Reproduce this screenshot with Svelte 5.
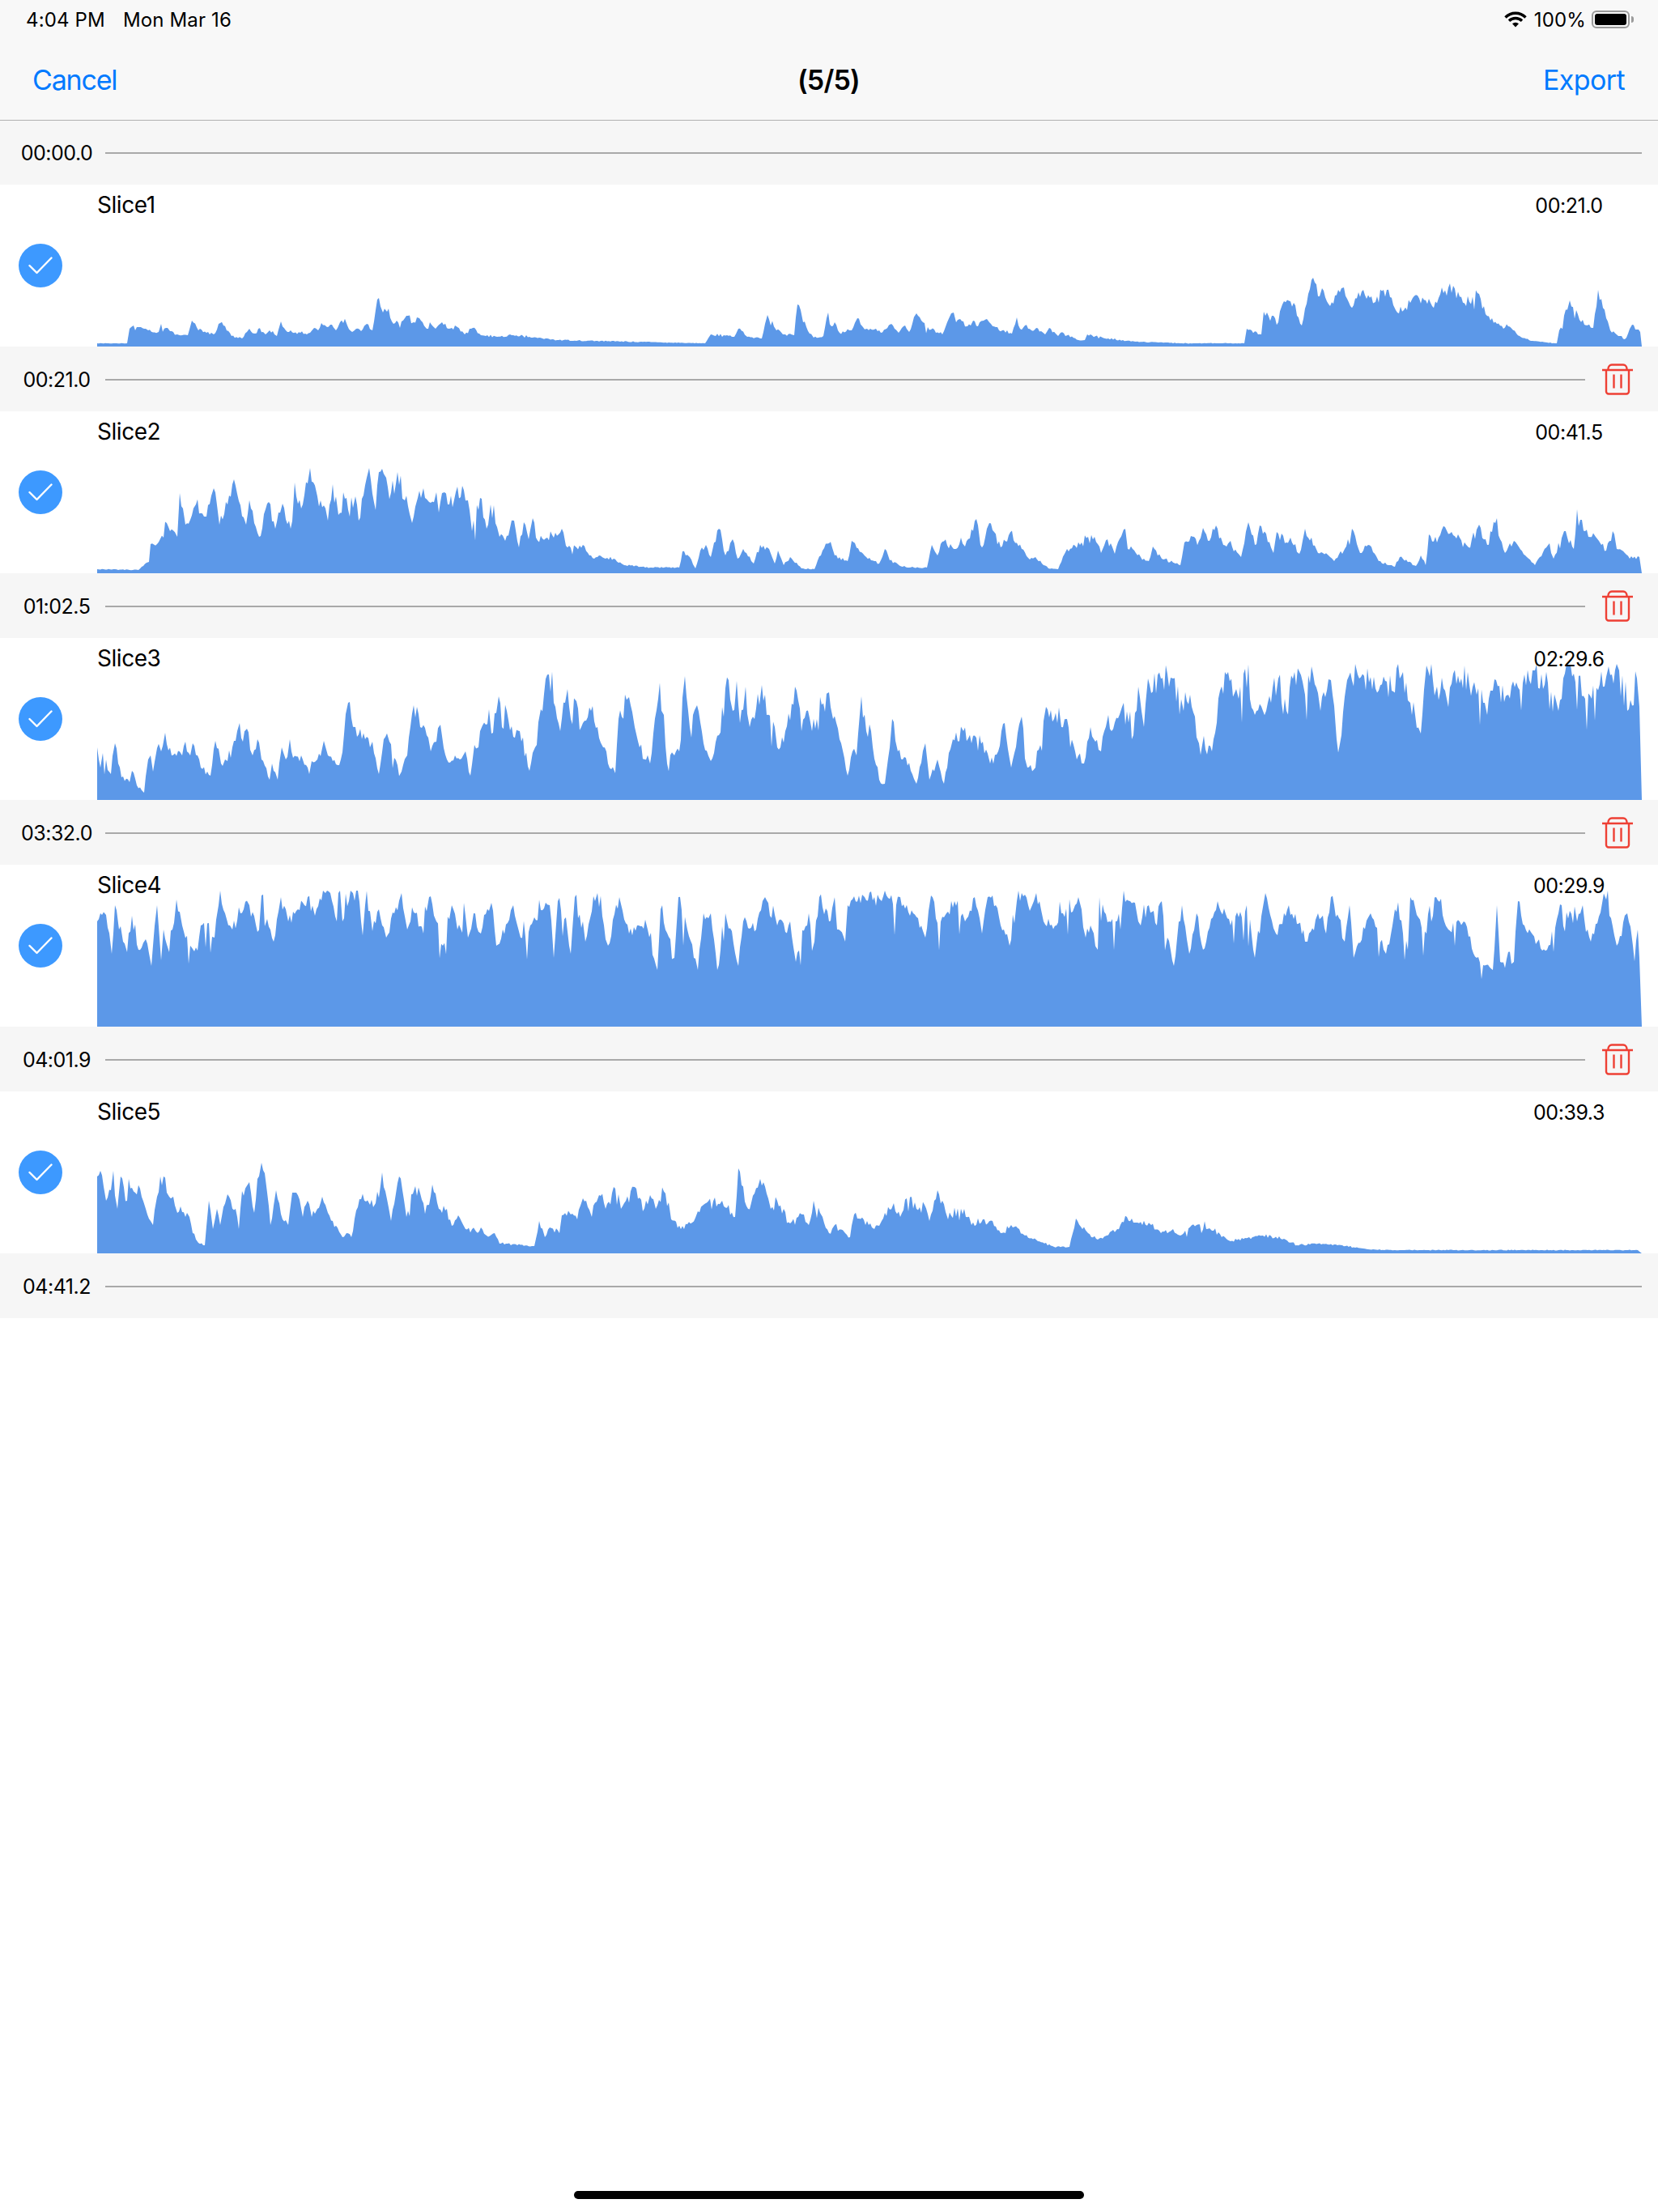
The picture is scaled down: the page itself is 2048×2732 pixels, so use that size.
<script>
    // control points of each waveform: page x, height above the baseline
    const slices = [
        {
            name: "Slice1", length: "00:21.0", end: "00:21.0", amp: 0.2,
            points: "120 4 157 4 160 22 165 26 172 24 183 20 196 18 199 28 210 19 219 15 232 14 237 32 245 20 257 18 264 15 272 29 276 26 286 13 299 10 308 22 315 16 319 22 328 15 333 20 342 13 347 31 353 20 371 17 379 15 388 23 393 20 397 29 404 24 408 27 415 20 420 30 429 26 435 18 440 22 446 19 453 28 460 20 464 45 468 60 473 42 478 43 484 31 496 31 504 38 511 30 518 35 527 22 533 27 538 22 546 30 554 22 565 24 574 15 584 23 594 14 614 12 634 14 670 10 690 8 871 4 878 15 907 12 912 22 923 12 941 10 948 39 959 20 970 15 981 14 985 52 989 45 992 30 1000 16 1005 11 1017 13 1021 35 1023 42 1027 25 1031 30 1037 17 1052 20 1059 35 1066 24 1071 22 1082 22 1088 17 1101 28 1110 17 1118 26 1123 18 1132 41 1140 30 1146 24 1164 15 1170 30 1175 41 1178 42 1181 30 1186 34 1195 25 1202 32 1208 25 1215 32 1222 30 1230 24 1238 20 1250 16 1256 36 1260 22 1266 26 1274 20 1280 23 1291 15 1296 23 1307 13 1310 17 1332 8 1340 8 1343 15 1365 10 1403 6 1458 4 1537 4 1540 22 1558 15 1561 43 1575 35 1579 30 1584 52 1598 54 1608 26 1614 53 1622 85 1628 62 1633 72 1643 50 1653 70 1660 73 1668 50 1682 68 1699 55 1713 70 1724 45 1738 45 1745 60 1769 50 1783 66 1795 75 1811 50 1825 66 1835 40 1849 28 1863 25 1877 13 1891 7 1923 4 1926 20 1939 57 1951 33 1968 23 1974 70 1989 20 2007 9 2016 27 2026 18 2028 0"
        },
        {
            name: "Slice2", length: "00:41.5", end: "01:02.5", amp: 0.24,
            points: "120 5 171 4 184 14 186 36 202 44 206 62 219 45 222 99 229 60 242 85 255 70 264 105 271 60 281 85 291 108 304 60 310 80 320 45 332 88 340 55 349 86 359 55 364 112 372 80 383 130 392 95 405 65 411 110 418 72 426 92 432 70 439 95 443 65 456 130 464 78 468 125 477 118 487 98 491 125 500 90 509 62 516 93 523 105 530 88 539 100 542 75 549 100 555 85 571 108 578 90 583 52 593 93 601 55 606 85 617 45 624 40 635 65 641 32 647 63 653 42 658 68 662 44 676 44 686 50 694 55 699 34 712 32 720 35 728 22 738 20 758 18 771 10 803 7 839 7 843 27 852 20 859 6 865 28 872 35 878 20 888 55 896 22 905 42 911 18 918 30 931 12 939 35 950 30 957 12 961 28 968 10 976 20 990 6 1006 5 1016 28 1024 37 1031 22 1047 15 1052 40 1070 20 1086 12 1093 30 1099 16 1115 8 1145 7 1151 35 1158 22 1164 39 1181 30 1187 44 1192 33 1206 67 1211 35 1215 35 1222 62 1236 32 1246 47 1262 30 1272 17 1279 20 1295 6 1307 5 1318 30 1334 35 1352 45 1360 25 1368 42 1377 24 1388 54 1393 30 1399 30 1409 20 1419 15 1424 33 1435 18 1452 12 1458 10 1463 38 1475 45 1481 40 1486 56 1494 40 1502 59 1511 35 1520 40 1533 20 1542 63 1550 35 1558 58 1573 25 1577 51 1589 38 1594 44 1605 24 1612 55 1628 25 1641 22 1648 15 1661 30 1670 55 1680 25 1690 35 1703 15 1723 8 1729 20 1749 9 1755 22 1761 10 1765 48 1775 38 1785 57 1801 48 1814 32 1827 60 1837 35 1847 62 1859 25 1870 40 1886 20 1896 10 1914 37 1919 18 1932 52 1944 30 1948 79 1958 52 1971 45 1978 35 1984 28 1992 52 1997 30 2007 25 2013 18 2025 20 2028 0"
        },
        {
            name: "Slice3", length: "02:29.6", end: "03:32.0", amp: 0.24,
            points: "120 65 124 40 127 58 137 32 142 70 150 28 160 22 163 36 169 18 178 9 183 50 186 55 189 35 194 64 199 60 204 83 212 55 225 55 229 72 235 55 238 70 248 40 260 30 266 73 273 45 278 50 281 48 287 65 296 95 300 72 305 88 312 55 318 75 323 50 333 25 336 45 343 25 348 65 353 50 358 75 362 52 372 55 382 32 385 48 392 50 400 73 405 55 411 48 421 50 430 120 439 90 451 75 457 65 460 72 468 32 474 75 481 72 487 52 496 35 503 55 511 117 519 90 527 80 532 60 539 72 544 93 552 50 562 55 568 50 575 60 581 30 586 68 591 65 596 92 604 112 607 82 616 128 620 90 626 110 634 78 642 85 654 36 661 65 668 112 678 155 686 115 692 85 701 137 705 100 712 122 718 90 730 110 738 90 745 65 751 45 760 33 764 100 777 127 784 90 790 65 803 45 813 125 820 105 824 45 833 55 839 60 846 153 852 90 861 117 869 70 878 48 888 80 900 148 905 110 910 147 914 95 921 140 926 90 941 142 947 105 957 90 960 65 970 85 982 140 990 85 996 110 1003 85 1009 100 1024 133 1029 100 1037 75 1047 30 1053 60 1058 55 1064 128 1070 85 1076 85 1086 25 1093 20 1102 100 1109 60 1119 52 1132 20 1143 70 1148 25 1158 50 1166 20 1177 75 1190 85 1200 70 1210 80 1223 45 1233 60 1241 95 1249 40 1262 103 1269 40 1279 40 1292 115 1302 100 1311 90 1318 100 1328 60 1339 45 1347 90 1360 60 1369 105 1373 85 1386 115 1400 80 1406 140 1413 90 1418 150 1449 150 1462 110 1470 130 1481 70 1497 60 1507 135 1517 158 1530 125 1538 162 1550 105 1560 110 1566 120 1579 150 1589 110 1599 158 1612 130 1620 165 1631 110 1644 148 1651 75 1657 80 1664 148 1677 155 1703 135 1729 150 1742 120 1755 82 1762 166 1775 140 1785 135 1805 150 1824 130 1834 120 1837 105 1844 135 1863 130 1883 155 1896 160 1925 110 1938 165 1958 125 1987 165 2000 160 2010 110 2022 150 2025 115 2028 0"
        },
        {
            name: "Slice4", length: "00:29.9", end: "04:01.9", amp: 0.12,
            points: "120 130 124 140 131 138 138 90 142 150 147 120 152 105 157 92 163 137 171 95 180 108 187 75 194 150 199 82 202 120 209 92 218 157 225 125 235 100 240 93 248 125 258 128 265 110 270 150 278 140 287 120 297 140 308 150 318 117 323 162 330 133 338 105 347 160 356 130 366 143 376 150 380 160 389 137 402 165 408 165 416 130 418 165 423 130 436 165 451 150 460 118 468 145 477 110 487 140 496 165 503 120 513 140 523 115 530 160 539 130 547 100 558 150 565 120 573 153 578 110 585 140 594 115 598 138 607 153 613 100 627 128 634 150 643 110 653 117 660 135 679 150 684 85 689 155 699 135 705 90 710 160 723 105 738 165 751 100 765 160 777 115 789 125 800 120 812 70 816 145 833 85 838 160 849 120 862 70 869 140 878 140 886 70 896 140 912 75 918 130 934 120 945 160 960 125 976 130 983 80 999 140 1006 105 1012 160 1024 130 1031 160 1034 120 1044 105 1047 150 1068 160 1089 155 1112 160 1128 140 1143 110 1150 162 1158 128 1169 140 1179 155 1192 130 1204 160 1213 115 1220 160 1230 150 1240 120 1247 100 1256 155 1262 165 1275 150 1280 165 1289 130 1305 125 1311 140 1328 150 1332 160 1341 110 1347 125 1356 95 1358 160 1370 130 1396 155 1409 125 1419 150 1429 125 1435 155 1442 110 1450 75 1460 150 1469 90 1478 140 1486 95 1504 155 1520 125 1540 150 1550 85 1563 165 1576 115 1592 150 1615 105 1628 140 1638 115 1644 160 1661 105 1667 150 1672 85 1693 140 1712 90 1723 145 1739 95 1742 160 1762 115 1774 160 1789 120 1808 130 1824 85 1844 70 1849 150 1853 80 1870 80 1875 155 1883 125 1899 105 1911 95 1929 150 1948 130 1955 150 1965 105 1984 157 1997 100 2010 140 2017 100 2023 120 2025 85 2028 0"
        },
        {
            name: "Slice5", length: "00:39.3", end: "04:41.2", amp: 0.22,
            points: "120 95 124 102 131 65 137 78 140 102 145 55 149 95 157 65 159 92 167 75 173 80 180 55 189 35 194 70 198 95 202 95 209 70 214 70 219 50 223 58 229 45 234 45 238 25 245 13 253 10 258 65 263 30 268 55 272 35 281 73 291 55 295 30 299 77 308 88 314 50 318 92 323 112 330 75 334 35 341 78 349 42 356 35 361 75 366 75 374 45 380 65 385 45 392 55 398 70 405 50 411 40 423 20 428 25 434 20 444 67 457 60 464 62 472 100 483 40 493 95 502 45 513 83 523 62 530 60 534 85 542 55 552 55 560 35 566 47 575 30 588 27 594 32 601 22 611 25 617 12 660 9 666 40 673 20 679 32 691 25 694 47 705 48 713 42 720 68 731 45 740 72 748 55 760 80 767 55 784 82 794 52 803 72 810 55 822 74 829 42 841 30 855 38 862 52 869 60 892 65 908 45 912 105 924 55 939 92 952 55 960 65 976 37 993 48 999 35 1005 65 1016 45 1024 25 1031 35 1044 25 1050 20 1055 48 1073 35 1080 30 1089 40 1104 62 1112 45 1120 68 1132 55 1142 60 1148 40 1158 78 1171 42 1191 55 1200 35 1226 40 1236 25 1249 35 1266 22 1282 15 1302 8 1321 8 1329 43 1337 30 1344 25 1354 18 1367 22 1380 30 1392 45 1403 38 1422 35 1432 28 1449 30 1458 22 1478 35 1497 28 1520 15 1543 20 1560 22 1586 18 1602 10 1628 12 1658 10 1690 5 1723 4 2023 4 2028 0"
        }
    ]

    function wavePath(slice, seed) {
        let state = seed
        const rand = () => {
            state = (state * 1664525 + 1013904223) % 4294967296
            return state / 4294967296
        }
        const nums = slice.points.split(" ").map(Number)
        let d = "M0 200"
        for (let i = 0; i < nums.length - 2; i += 2) {
            const [x0, h0, x1, h1] = nums.slice(i, i + 4)
            d += ` L${x0 - 120} ${200 - h0}`
            for (let x = x0 + 2; x < x1 - 1; x += 2) {
                const t = (x - x0) / (x1 - x0)
                const h = h0 + (h1 - h0) * t
                let wobble = h * slice.amp * (rand() - 0.5) + (h > 8 ? 1.5 * (rand() - 0.5) : 0)
                // narrow spikes and notches, only where the signal is loud
                if (h > 25) {
                    const kick = rand()
                    if (kick < 0.1) wobble += h * 0.16 * rand()
                    else if (kick < 0.17) wobble -= h * 0.3 * rand()
                }
                // the loudest peak in the reference stops about 168px up
                d += ` L${x - 120} ${Math.max(32, 200 - h - wobble).toFixed(1)}`
            }
        }
        return d + " L1908 200 Z"
    }
</script>

<div class="page">
    <header class="top">
        <div class="status">
            <span>4:04 PM</span>
            <span class="date">Mon Mar 16</span>
            <svg class="wifi" width="28" height="20" viewBox="0 0 28 20">
                <path d="M1.5 7.5 A17.5 17.5 0 0 1 26.5 7.5" fill="none" stroke="#000" stroke-width="3.4" />
                <path d="M6 11.8 A11.5 11.5 0 0 1 22 11.8" fill="none" stroke="#000" stroke-width="3.4" />
                <path d="M10 15.2 A6 6 0 0 1 18 15.2 L14 19.5 Z" fill="#000" />
            </svg>
            <span class="percent">100%</span>
            <div class="battery"><div class="charge"></div></div>
            <div class="nub"></div>
        </div>
        <nav class="nav">
            <span class="link">Cancel</span>
            <span class="title">(5/5)</span>
            <span class="link right">Export</span>
        </nav>
    </header>

    <div class="cut first">
        <span class="time">00:00.0</span>
        <div class="line"></div>
    </div>

    {#each slices as slice, i}
        <section class="slice">
            <div class="check">
                <svg width="30" height="22" viewBox="0 0 30 22">
                    <path d="M1.5 11 L10.5 20 L28.5 1.5" fill="none" stroke="#fff" stroke-width="2.4" stroke-linecap="round" stroke-linejoin="round" />
                </svg>
            </div>
            <svg class="wave" width="1908" height="200" viewBox="0 0 1908 200">
                <path d={wavePath(slice, 17 + i * 91)} fill="#5c98e8" />
            </svg>
            <div class="head">
                <span class="name">{slice.name}</span>
                <span class="length">{slice.length}</span>
            </div>
        </section>
        <div class="cut">
            <span class="time">{slice.end}</span>
            <div class="line"></div>
            {#if i < slices.length - 1}
                <svg class="trash" width="40" height="40" viewBox="0 1.5 40 40">
                    <g fill="none" stroke="#ee4035" stroke-width="2.4">
                        <path d="M1 9.5 H39" />
                        <path d="M8.5 9 V8 A5 5 0 0 1 13 3 H27 A5 5 0 0 1 31.5 8 V9" />
                        <path d="M6 10 V36 A3 3 0 0 0 9 39 H31 A3 3 0 0 0 34 36 V10" />
                        <path d="M15.5 15 V32 M24.5 15 V32" />
                    </g>
                </svg>
            {/if}
        </div>
    {/each}

    <div class="home"></div>
</div>

<style>
    :global(body) {
        background: #fff;
    }
    .page {
        display: flex;
        flex-direction: column;
        height: 2732px;
        box-sizing: border-box;
        overflow: hidden;
        font-family: Inter, "Liberation Sans", sans-serif;
        color: #000;
    }
    .top {
        height: 149px;
        box-sizing: border-box;
        flex-shrink: 0;
        background: #f8f8f8;
        border-bottom: 1px solid #b0b0b0;
    }
    .status {
        display: flex;
        align-items: center;
        height: 48px;
        padding: 0 30px 0 32px;
        font-size: 24px;
        letter-spacing: 0.15px;
    }
    .date {
        margin-left: 22px;
        flex: 1;
    }
    .percent {
        margin-left: 9px;
    }
    .battery {
        width: 47px;
        height: 22px;
        box-sizing: border-box;
        margin-left: 7px;
        padding: 2px;
        border: 2px solid #9b9b9b;
        border-radius: 6px;
    }
    .charge {
        height: 100%;
        background: #000;
        border-radius: 3px;
    }
    .nub {
        width: 3px;
        height: 8px;
        margin-left: 2px;
        background: #9b9b9b;
        border-radius: 0 3px 3px 0;
    }
    .nav {
        display: grid;
        grid-template-columns: 1fr auto 1fr;
        align-items: center;
        height: 100px;
        padding: 0 41px 0 40px;
        font-size: 34px;
    }
    .link {
        color: #007aff;
        letter-spacing: -1.2px;
    }
    .right {
        text-align: right;
        letter-spacing: -0.6px;
    }
    .title {
        font-weight: 600;
        letter-spacing: -0.8px;
    }
    .cut {
        display: flex;
        align-items: center;
        height: 80px;
        box-sizing: border-box;
        padding-top: 2px;
        flex-shrink: 0;
        background: #f6f6f6;
    }
    .cut.first {
        height: 79px;
        padding-top: 0;
    }
    .time {
        width: 110px;
        margin-left: 15px;
        text-align: center;
        font-size: 25px;
        letter-spacing: -0.5px;
        white-space: nowrap;
    }
    .line {
        flex: 1;
        height: 2px;
        margin: 0 20px 0 5px;
        background: #a9a9a9;
    }
    .trash {
        flex-shrink: 0;
        margin-right: 30px;
    }
    .slice {
        position: relative;
        display: flex;
        align-items: center;
        height: 200px;
        flex-shrink: 0;
        background: #fff;
    }
    .check {
        display: flex;
        align-items: center;
        justify-content: center;
        width: 54px;
        height: 54px;
        margin-left: 23px;
        border-radius: 50%;
        background: #3d99ff;
    }
    .wave {
        position: absolute;
        left: 120px;
        bottom: 0;
    }
    .head {
        position: absolute;
        left: 120px;
        right: 40px;
        top: 7px;
        display: flex;
        align-items: center;
        justify-content: space-between;
        height: 36px;
    }
    .name {
        font-size: 28px;
        letter-spacing: -0.45px;
    }
    .length {
        width: 140px;
        padding-top: 1px;
        text-align: center;
        font-size: 25px;
        letter-spacing: -0.45px;
    }
    .home {
        width: 630px;
        height: 10px;
        margin: auto auto 16px;
        border-radius: 5px;
        background: #000;
        flex-shrink: 0;
    }
</style>
